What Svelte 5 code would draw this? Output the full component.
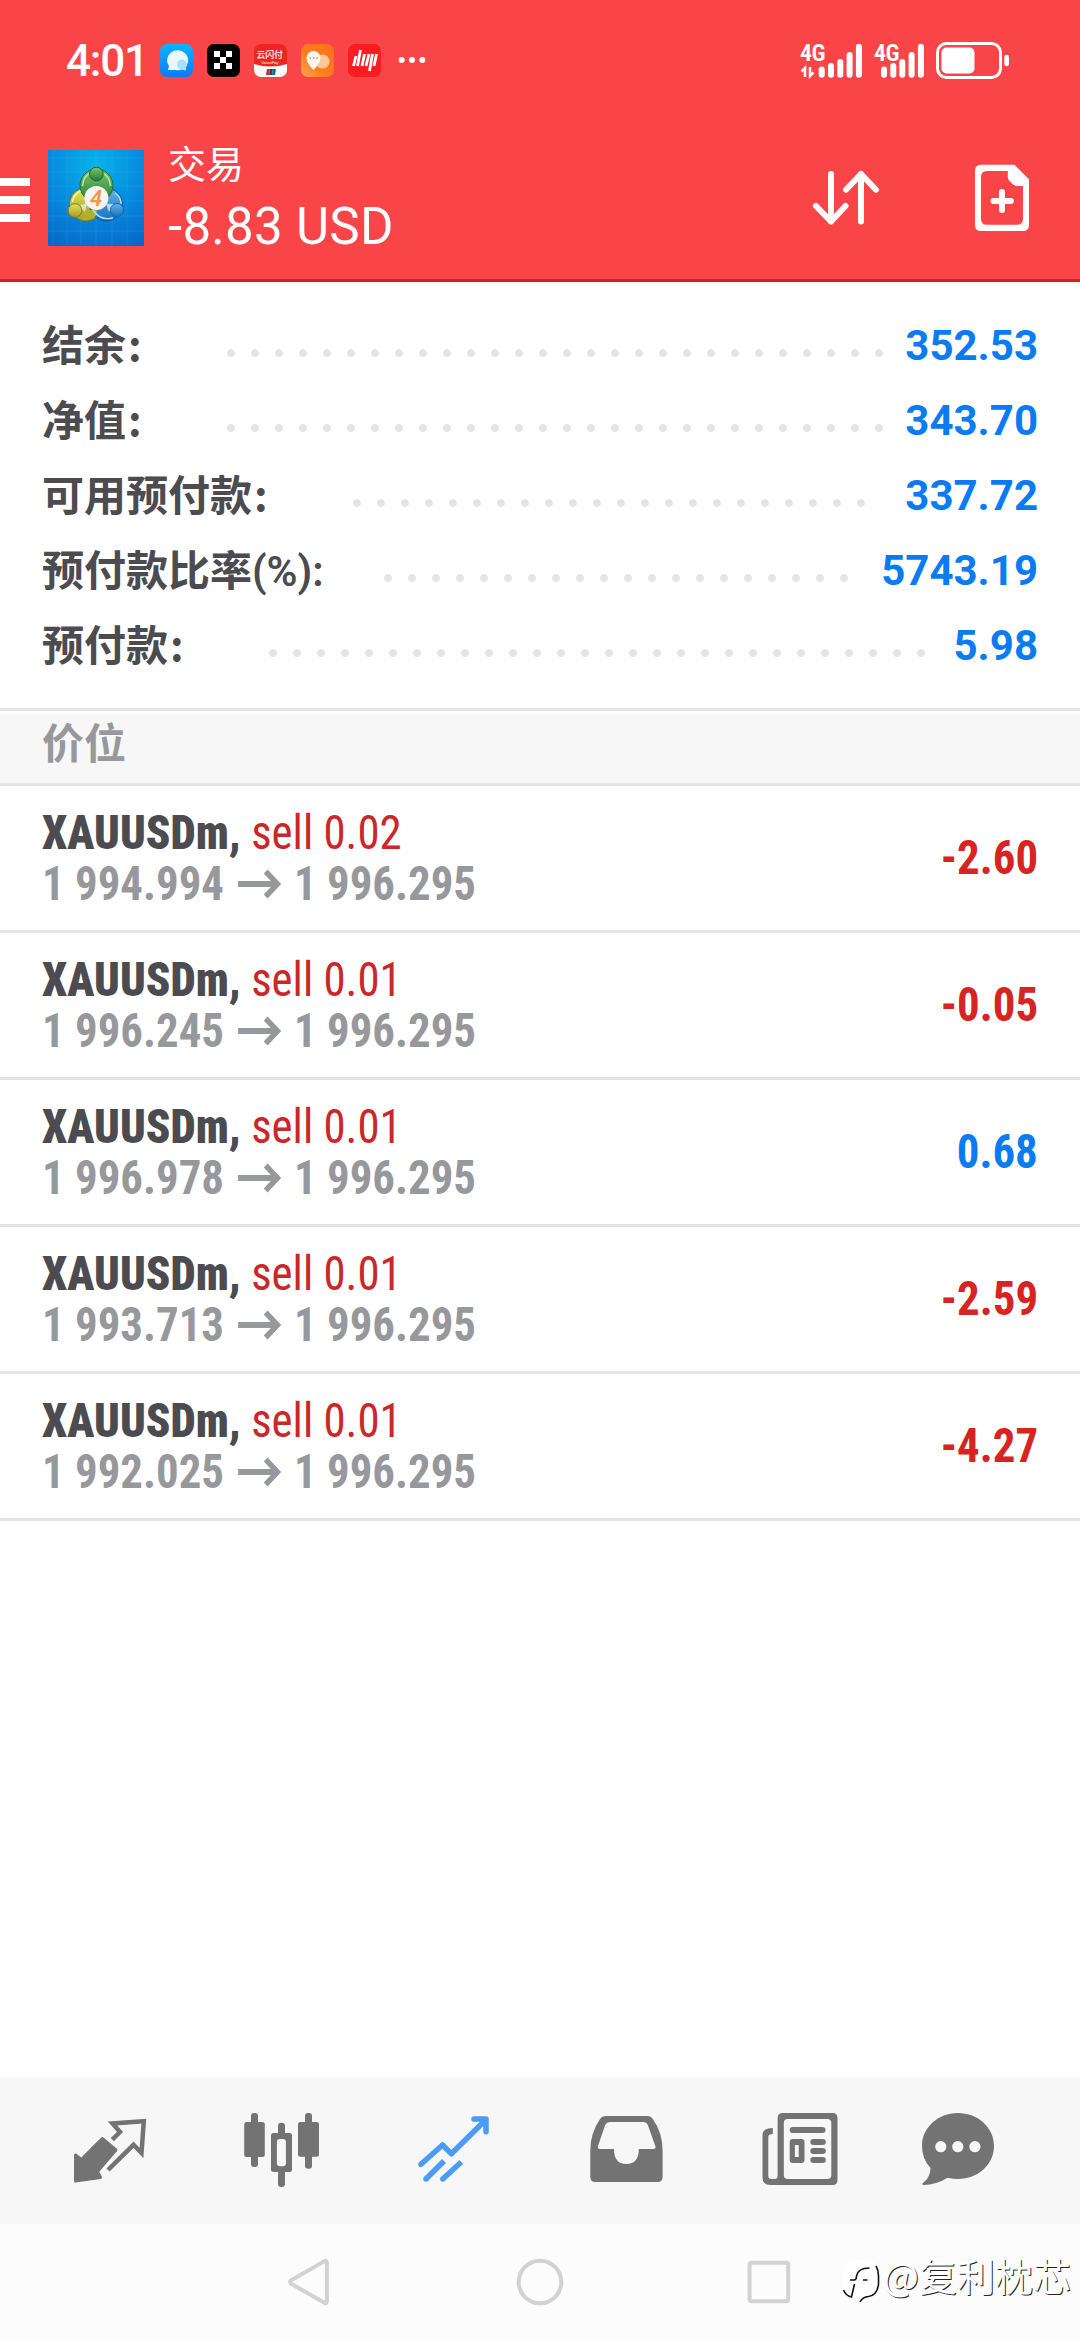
<script>
  const account = [
    { label: '结余', value: '352.53', start: 184, dots: 28 },
    { label: '净值', value: '343.70', start: 184, dots: 28 },
    { label: '可用预付款', value: '337.72', start: 310, dots: 22 },
    { label: '预付款比率', suffix: '(%):', value: '5743.19', start: 341, dots: 20 },
    { label: '预付款', value: '5.98', start: 226, dots: 28 }
  ];
  const positions = [
    { lots: '0.02', open: '1 994.994', profit: '-2.60' },
    { lots: '0.01', open: '1 996.245', profit: '-0.05' },
    { lots: '0.01', open: '1 996.978', profit: '0.68' },
    { lots: '0.01', open: '1 993.713', profit: '-2.59' },
    { lots: '0.01', open: '1 992.025', profit: '-4.27' }
  ];
</script>

<div class="screen">
  <header>
    <div class="status">
      <span class="clock">4:01</span>
      <svg class="apps" width="270" height="36" viewBox="158 43 270 36">
        <defs>
          <linearGradient id="msg" x1="0" y1="0" x2="0" y2="1"><stop offset="0" stop-color="#0db4ff" /><stop offset="1" stop-color="#0a7bf5" /></linearGradient>
          <linearGradient id="org" x1="1" y1="0" x2="0" y2="1"><stop offset="0" stop-color="#ff6f1c" /><stop offset=".6" stop-color="#ff7d1c" /><stop offset="1" stop-color="#ffa658" /></linearGradient>
          <clipPath id="pay"><rect x="254" y="44" width="33" height="33" rx="7" /></clipPath>
        </defs>
        <rect x="160" y="44" width="33" height="33" rx="7" fill="url(#msg)" />
        <path d="M168 70l1-4a10.500 10 0 1 1 6 4z" fill="#eaf7ff" />
        <path d="M181 69.500a5 5 0 1 1 5-2l0 3z" fill="#a9e0ff" />
        <rect x="207" y="44" width="33" height="33" rx="7" fill="#000" />
        <path d="M214 51h6v6h-6zM226 51h6v6h-6zM220 57h6v6h-6zM214 63h6v6h-6zM226 63h6v6h-6z" fill="#fff" />
        <g clip-path="url(#pay)">
          <rect x="254" y="44" width="33" height="33" fill="#f0251f" />
          <path d="M254 64q16.500 5 33 0v14h-33z" fill="#fff" />
          <path d="M267 69h3l-1 6h-3z" fill="#d22" /><path d="M270 69h3l-1 6h-3z" fill="#124a80" /><path d="M273 69h3l-1 6h-3z" fill="#0b7475" />
          <text x="256.500" y="58" class="pay1">云闪付</text>
          <text x="261.500" y="64" class="pay2">UnionPay</text>
        </g>
        <rect x="301" y="44" width="33" height="33" rx="7" fill="url(#org)" />
        <circle cx="322.500" cy="61.500" r="7" fill="#ffc79c" />
        <path d="M313.500 70q-7-7-7-12a7 7 0 0 1 14 0q0 5-7 12z" fill="#fff6ee" />
        <path d="M309.500 58h1.500m2 0h1.500m2 0h1.500" stroke="#e9905a" stroke-width="1.500" />
        <rect x="348" y="44" width="33" height="33" rx="7" fill="#fb1c21" />
        <path d="M356 56l-2.500 10M360.500 50l-3 16M364.500 54l-2.500 12M369 54l-3 12M372.500 54l-3 17M376.500 54l-2.500 12" stroke="#fff" stroke-width="2.800" />
        <circle cx="401.700" cy="60" r="3" fill="#fff" /><circle cx="412" cy="60" r="3" fill="#fff" /><circle cx="422.300" cy="60" r="3" fill="#fff" />
      </svg>
      <svg class="radio" width="214" height="42" viewBox="798 39 214 42" fill="#fff">
        <text x="800" y="60" class="net">4G</text>
        <text x="874" y="60" class="net">4G</text>
        <path d="M805 76V67l-3.500 3.500M810 66v9l3.500-3.500" fill="none" stroke="#fff" stroke-width="2.500" />
        <g stroke="#fff" stroke-width="6" stroke-linecap="round">
          <path d="M821.700 68.500v5.200M831 65v8.700M840.300 61v12.700M849.600 54v19.700M858.900 45.700v28" />
          <path d="M884 68.500v5.200M893.300 65v8.700M902.300 61v12.700M911.600 54v19.700M920.900 45.700v28" />
        </g>
        <rect x="937.500" y="42.500" width="63" height="34" rx="9" fill="none" stroke="#fff" stroke-width="3" />
        <rect x="941.500" y="46.500" width="33" height="26" rx="5" />
        <rect x="1004.300" y="53.700" width="4.700" height="11.500" rx="2.300" />
      </svg>
    </div>
    <div class="bar">
      <div class="menu"><i></i><i></i><i></i></div>
      <svg class="logo" width="96" height="96" viewBox="0 0 96 96">
        <defs>
          <radialGradient id="sky" cx=".5" cy=".15" r=".95"><stop offset="0" stop-color="#06b4ea" /><stop offset=".5" stop-color="#078bdf" /><stop offset="1" stop-color="#0768c6" /></radialGradient>
          <linearGradient id="gr" x1="0" y1="0" x2="0" y2="1"><stop offset="0" stop-color="#7cc46c" /><stop offset="1" stop-color="#23803a" /></linearGradient>
          <linearGradient id="ye" x1="0" y1="0" x2="0" y2="1"><stop offset="0" stop-color="#e6df5c" /><stop offset="1" stop-color="#a3a024" /></linearGradient>
          <linearGradient id="bl" x1="0" y1="0" x2="0" y2="1"><stop offset="0" stop-color="#62b4ea" /><stop offset="1" stop-color="#1673c0" /></linearGradient>
        </defs>
        <rect width="96" height="96" fill="url(#sky)" />
        <path d="M0 8h96M0 22h96M0 36h96M0 51h96M0 66h96M0 81h96M5 0v96M19 0v96M33 0v96M48 0v96M64 0v96M79 0v96" stroke="#5cc8f5" stroke-opacity=".15" />
        <circle cx="38" cy="54.500" r="16.500" fill="url(#ye)" stroke="#77751c" />
        <circle cx="58" cy="54.500" r="16.500" fill="url(#bl)" stroke="#0d5598" />
        <path d="M48 66q-7 5-14 4l3-10h12z" fill="#b5b02c" />
        <circle cx="48.500" cy="35.500" r="16.500" fill="url(#gr)" stroke="#1e6b33" />
        <g fill="none">
          <path d="M34.500 36q1-11 9-13M62.500 36q-1-11-9-13" stroke="#b9e8ad" stroke-width="1.400" />
          <path d="M24.500 52q1-8 8-11" stroke="#faf7a0" stroke-width="1.400" />
          <path d="M45 60q7 11 20 8M67 43q6 4 6 11" stroke="#b5e0fb" stroke-width="1.400" />
        </g>
        <path d="M31 56l8-3-2 9zM66 54l-8 0 3 8z" fill="#dff0fa" opacity=".75" />
        <circle cx="48.400" cy="24" r="6.800" fill="url(#gr)" stroke="#1c662d" />
        <circle cx="27" cy="60.500" r="6.800" fill="url(#ye)" stroke="#84821c" />
        <circle cx="69" cy="60" r="6.500" fill="url(#bl)" stroke="#1568a8" />
        <circle cx="48.400" cy="48" r="12" fill="#f5f5f3" />
        <text x="42" y="56" class="four">4</text>
      </svg>
      <div class="heading">
        <div class="title">交易</div>
        <div class="total">-8.83 USD</div>
      </div>
      <svg class="actions" width="220" height="70" viewBox="811 163 220 70" fill="none" stroke="#fff" stroke-width="6" stroke-linecap="round" stroke-linejoin="round">
        <path d="M831 174v47.500M816 206l15 15.500 14.500-15.500M861 221.500V174M846 189.700L861 174l15 15.700" />
        <path fill="#fff" stroke="none" fill-rule="evenodd" d="M981 164.700H1014.500L1029 179.300V225q0 6-6 6H981q-6 0-6-6V170.700q0-6 6-6zM987 171q-6 0-6 6V218.700q0 6 6 6H1017q6 0 6-6V186h-5q-3 0-5-1.500l-3.500-3.500q-1.700-2-1.700-4v-6z" />
        <path d="M993.400 201h17.500M1002 192v18" />
      </svg>
    </div>
  </header>

  <section class="account">
    {#each account as row}
      <div class="line">
        <span class="label" style:width="{row.start}px">{row.label}{#if row.suffix}<span class="suffix">{row.suffix}</span>{:else}<span class="colon">:</span>{/if}</span>
        <span class="leader" style:width="{row.dots * 24}px"></span>
        <span class="value">{row.value}</span>
      </div>
    {/each}
  </section>
  <h2>价位</h2>
  <section class="positions">
    {#each positions as p}
      <div class="position">
        <div class="deal">
          <div class="name"><b>XAUUSDm,</b> <span>sell {p.lots}</span></div>
          <div class="prices">
            <span>{p.open}</span>
            <svg width="47" height="30" viewBox="0 0 47 30"><path d="M0 15h41M29.500 2.500L42 15 29.500 27.500" fill="none" stroke="#97989c" stroke-width="5.800" /></svg>
            <span>1 996.295</span>
          </div>
        </div>
        <span class="profit" class:gain={!p.profit.startsWith('-')}>{p.profit}</span>
      </div>
    {/each}
  </section>

  <nav class="tabs">
    <svg viewBox="57 0 101 147">
      <path d="M102.300 61.500L116 73 97.500 94.500 100.500 100.500 75.500 104V78L81.300 82.500z" fill="#737373" stroke="#737373" stroke-width="3" stroke-linejoin="round" />
      <path d="M112.300 62.700L120 55 112.500 46.500 143.800 44.300 141.500 76 133.500 67.800 108 93" fill="none" stroke="#737373" stroke-width="4.500" />
    </svg>
    <svg viewBox="230 0 101 147" fill="#737373">
      <rect x="244.200" y="45" width="20.600" height="35" rx="2.500" /><rect x="251" y="36" width="7" height="54" rx="3" />
      <path fill-rule="evenodd" d="M273.500 56h16q2.500 0 2.500 2.500v34q0 2.500-2.500 2.500h-16q-2.500 0-2.500-2.500v-34q0-2.500 2.500-2.500zM279.900 62q-3 0-3 3v21.300q0 3 3 3h3q3 0 3-3V65q0-3-3-3z" />
      <path d="M278 57v-8q0-3.300 3.500-3.300t3.500 3.300v8zM278 94v12.700q0 3.300 3.500 3.300t3.500-3.300V94z" />
      <rect x="298" y="45" width="21" height="34.700" rx="2.500" /><rect x="305" y="36" width="7" height="55.700" rx="3" />
    </svg>
    <svg viewBox="403 0 101 147" fill="none" stroke="#4a9cf6" stroke-width="5.500">
      <path d="M421 87.300L442.500 68 451.400 76.800 485 43.500M474 42h12v12.700" stroke-linecap="round" stroke-linejoin="round" />
      <path d="M426 102l18-18M442.800 102l18.500-17" /><path d="M426 102h0M442.800 102h0" stroke-linecap="round" />
    </svg>
    <svg viewBox="576 0 101 147">
      <path fill="#737373" fill-rule="evenodd" d="M605.500 39h42.500q3 0 4.500 2.500q10 14 10.100 32V100q0 5-5 5H595.300q-5 0-5-5V73.500q.1-18 10.100-32q1.500-2.500 5-2.500zM610 45q-3.500 0-5 3.500L598 69q-1 3 2 3h14q0 15 12.400 15t12.400-15h14.500q3 0 2-3L648 48.500q-1.300-3.500-5-3.500z" />
    </svg>
    <svg viewBox="749 0 101 147" fill="#737373">
      <path fill-rule="evenodd" d="M783 36h49.500q5 0 5 5v62q0 5-5 5H770q-7.500 0-7.500-7.500V58q0-7 10.300-7v6q-4.500 0-4.500 3v39q0 3 3 3h3.300q3 0 3-3V41q0-5 5.400-5zM787.800 42q-4 0-4 4v52q0 4 4 4h39.500q4 0 4-4V46q0-4-4-4z" />
      <rect x="789.700" y="50" width="35.800" height="6" rx="3" />
      <path fill-rule="evenodd" d="M792.700 62h8.800q3 0 3 3v18q0 3-3 3h-8.800q-3 0-3-3V65q0-3 3-3zM794.900 68v12h3.800V68z" />
      <rect x="810.300" y="62" width="15.500" height="6" rx="3" /><rect x="810.300" y="71" width="15.500" height="6" rx="3" /><rect x="810.300" y="80" width="15.500" height="6" rx="3" />
    </svg>
    <svg viewBox="922 0 101 147">
      <path fill="#737373" d="M958 36c20 0 36 14.500 36 33s-16 33-36 33q-5 0-10.300-1.200Q936 108 923.500 108q-2.500-.3 0-2.500Q930.500 100 930.500 91 922 82 922 69c0-18.500 16-33 36-33z" />
      <g fill="#f7f7f7"><circle cx="940.800" cy="69.700" r="5.600" /><circle cx="957.800" cy="69.700" r="5.600" /><circle cx="974.900" cy="69.700" r="5.600" /></g>
    </svg>
  </nav>
  <footer>
    <svg viewBox="290 36 40 44"><path d="M290.700 56.500q-1.200 1.500 0 3l34 19.500q2 .8 2.200-1.500V38.500q-.2-2.300-2.200-1.500z" /></svg>
    <svg viewBox="520 36 40 44"><circle cx="540" cy="58" r="21.300" /></svg>
    <svg viewBox="750 36 40 44"><rect x="749.600" y="38.700" width="38.600" height="38.600" rx="2" /></svg>
  </footer>
  <div class="watermark">
    <svg width="38" height="46" viewBox="838 2258 38 46">
      <path d="M838.900 2275q0-15 15-15h7q15 0 15 15v8q0 14-17 15-10 0-10-3-8-2-10-9z" fill="#fff" />
      <path d="M873 2266q2.500 4 2.500 10v8q-1 11-10 12.500-6 .5-8.500 5.500M840.500 2290q2.500 6 8 7l3-13M847 2280h4q2.500 0 2.500-4 1.500-8 13-8M860 2280h4.500" fill="none" stroke="#111" stroke-width="1.600" />
    </svg>
    <span>@复利枕芯</span>
  </div>
</div>

<style>
  :global(body) { margin: 0; }
  .screen { position: relative; display: flex; flex-direction: column; width: 1080px; height: 2340px; overflow: hidden; background: #fff; font-family: Roboto, 'Noto Sans CJK SC', sans-serif; color: #4c4b50; }
  svg { display: block; flex: none; overflow: visible; }
  header { box-sizing: border-box; height: 282px; background: #f94547; border-bottom: 3px solid #c72428; color: #fff; }
  .status { display: flex; align-items: center; height: 121px; padding: 0 68px 0 66px; }
  .clock { width: 92px; font-size: 44px; font-weight: 500; letter-spacing: -1.200px; line-height: 44px; }
  .radio { margin-left: auto; }
  .pay1 { font: 500 9px 'Noto Sans CJK SC', sans-serif; fill: #fff; letter-spacing: -.2px; }
  .pay2 { font: 4px Roboto, sans-serif; fill: #fff; }
  .net { font: 600 24px Roboto, sans-serif; font-stretch: 75%; letter-spacing: -.5px; }
  .bar { display: flex; height: 158px; }
  .menu { display: flex; flex-direction: column; gap: 10px; width: 48px; padding-top: 57px; }
  .menu i { width: 30px; height: 8px; background: #fff; }
  .logo { margin-top: 29px; }
  .four { font: italic 600 22px Roboto, sans-serif; fill: #f2993c; }
  .heading { padding: 22px 0 0 24px; }
  .title { font-size: 38px; line-height: 44px; }
  .total { margin-top: 10px; font-size: 51px; line-height: 60px; letter-spacing: .3px; white-space: nowrap; }
  .actions { margin: 42px 49px 0 auto; }
  .account { box-sizing: border-box; height: 429px; padding: 26px 42px 0; border-bottom: 3px solid #e4e4e4; }
  .line { display: flex; align-items: center; height: 75px; font-size: 42px; font-weight: 700; line-height: 75px; }
  .label { height: 75px; margin-top: -7px; font-family: 'Noto Sans CJK SC', sans-serif; white-space: nowrap; }
  .colon { margin-left: 2px; }
  .suffix { font-family: Roboto, sans-serif; font-weight: 600; line-height: 1; }
  .leader { height: 8px; margin-top: 15px; margin-left: -7.500px; background: radial-gradient(circle at 12px 4px, #e4e4e4 3.500px, transparent 4.300px) 0 0 / 24px 8px; }
  .value { margin-left: auto; color: #0b7bf2; }
  h2 { box-sizing: border-box; height: 75px; margin: 0; padding-left: 42px; border-top: 3px solid #fff; border-bottom: 3px solid #e4e4e4; background: #f7f7f7; color: #97989c; font: 700 42px/54px 'Noto Sans CJK SC', sans-serif; }
  .position { box-sizing: border-box; display: flex; align-items: center; justify-content: space-between; height: 147px; padding: 0 42px; border-bottom: 3px solid #e4e4e4; font-size: 48px; font-weight: 700; font-stretch: 75%; line-height: 51px; }
  .deal { transform: scaleX(.934); transform-origin: left; }
  .name span { color: #cb2729; font-weight: 400; }
  .prices { display: flex; align-items: center; color: #97989c; }
  .prices svg { margin: 0 13px 0 15px; }
  .profit { margin-top: -2px; color: #d82323; transform: scaleX(.934); transform-origin: right; }
  .profit.gain { color: #0b7bf2; }
  .tabs { display: grid; grid-template-columns: repeat(6, 173px); justify-content: center; justify-items: center; height: 147px; margin-top: auto; background: #f7f7f7; }
  .tabs svg { width: 101px; height: 147px; }
  footer { display: grid; grid-template-columns: repeat(3, 230px); justify-content: center; justify-items: center; align-items: center; height: 116px; background: #fcfcfc; }
  footer svg { width: 40px; height: 44px; fill: none; stroke: #d2d2d2; stroke-width: 4; }
  .watermark { position: absolute; right: 9px; bottom: 29px; display: flex; align-items: center; gap: 4px; height: 60px; font: 38px/50px 'Noto Sans CJK SC', sans-serif; color: #fff; text-shadow: 1px 1px 0 #222; }
  .watermark span { margin-top: -13px; }
</style>
